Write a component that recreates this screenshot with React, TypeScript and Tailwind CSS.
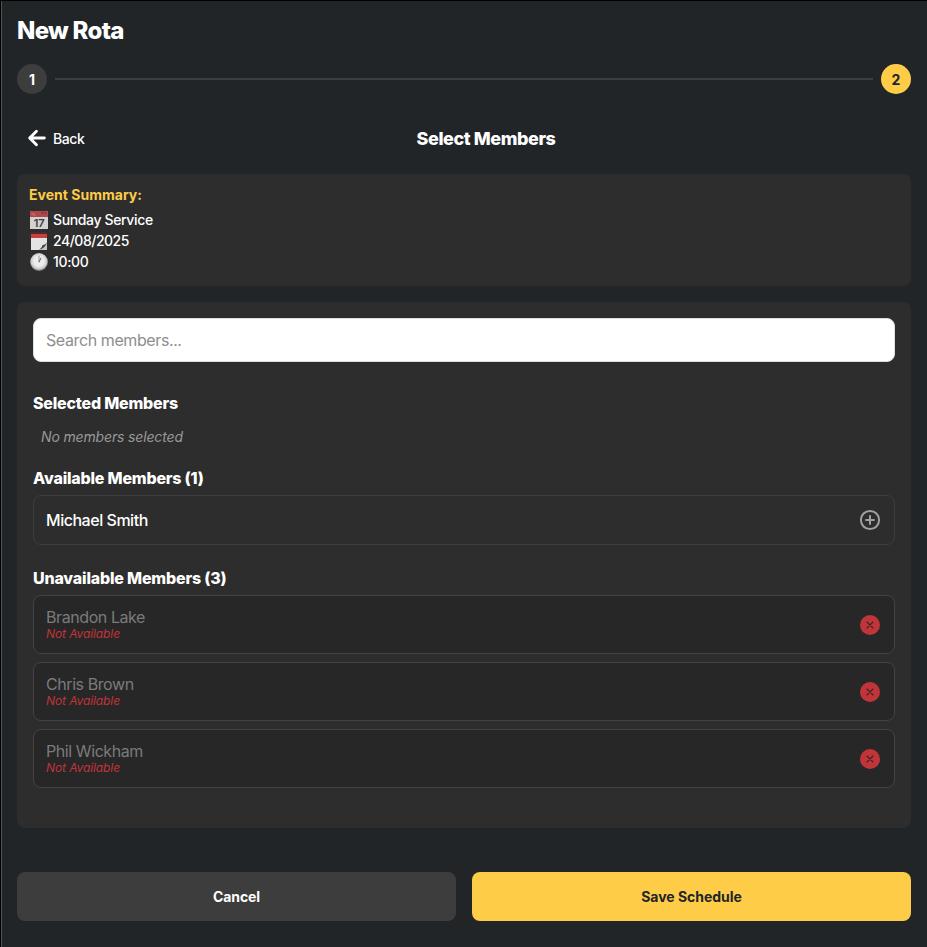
import React from "react";

const unavailable = ["Brandon Lake", "Chris Brown", "Phil Wickham"];

function BackArrow() {
  return (
    <svg viewBox="0 0 512 512" className="size-6 shrink-0" fill="none" stroke="currentColor" strokeWidth="62" strokeLinecap="round" strokeLinejoin="round">
      <path d="M244 400 100 256l144-144M120 256h292" />
    </svg>
  );
}

function AddCircle() {
  return (
    <svg viewBox="0 0 24 24" className="size-6 text-[#a0a0a0]" fill="none" stroke="currentColor" strokeWidth="2" strokeLinecap="round">
      <circle cx="12" cy="12" r="9.1" />
      <path d="M12 8v8M8 12h8" />
    </svg>
  );
}

function CloseCircle() {
  return (
    <svg viewBox="0 0 24 24" className="size-6">
      <circle cx="12" cy="12" r="10" fill="#c13439" />
      <path d="m9 9 6 6m0-6-6 6" stroke="#3a2425" strokeWidth="1.1" strokeLinecap="round" />
    </svg>
  );
}

function CalendarIcon() {
  return (
    <svg width="18" height="18" viewBox="0 0 18 18" className="shrink-0">
      <rect width="18" height="18" rx="0.5" fill="#d2d2d2" />
      <rect width="18" height="6" rx="0.5" fill="#b0484b" />
      <path d="M2.2 2v2.2M4 2v2.2h1.4" stroke="#d98c8d" strokeWidth="0.7" fill="none" />
      <circle cx="12.2" cy="1.8" r="0.9" fill="#6e2c2e" />
      <circle cx="15.2" cy="1.8" r="0.9" fill="#6e2c2e" />
      <text x="9" y="16" textAnchor="middle" fontSize="11" fontWeight="600" letterSpacing="-0.3" fill="#3b3b3b" fontFamily="Inter, sans-serif">17</text>
    </svg>
  );
}

function NotepadIcon() {
  return (
    <svg width="18" height="18" viewBox="0 0 18 18" className="shrink-0">
      <path d="M1 1h16v10.5L11 18H1z" fill="#e4e3e2" />
      <path d="M1 1h16v5H1z" fill="#c5413f" />
      <path d="M1 0h16v2H1z" fill="#4b2a2b" />
      <path d="M17 10c-1 2.300-3 2.500-4.500 2.700 0 2-1.500 4.300-3.500 5.300h8z" fill="#c4c4c3" />
      <path d="M17 10.500c-1.500 2-3 2.300-4.700 2.700-.2 2-1.500 3.500-3.300 4.400 3.500-.4 6.500-3 8-7.100z" fill="#454545" />
    </svg>
  );
}

function ClockIcon() {
  return (
    <svg width="18" height="18" viewBox="0 0 18 18" className="shrink-0">
      <defs>
        <radialGradient id="face" cx="50%" cy="45%" r="52%">
          <stop offset="0.55" stopColor="#ededed" />
          <stop offset="0.85" stopColor="#c9cacb" />
          <stop offset="1" stopColor="#858585" />
        </radialGradient>
      </defs>
      <circle cx="9" cy="9" r="8.900" fill="url(#face)" />
      <path d="M9 9V2.700" stroke="#999" strokeWidth="1" />
      <path d="M9 9.300l2-4.500" stroke="#666" strokeWidth="1" />
    </svg>
  );
}

export default function App() {
  return (
    <div className="flex h-[947px] w-[927px] flex-col overflow-hidden border-l border-t border-black bg-[#212528] font-['Inter',sans-serif] text-white">
      <div className="flex flex-1 flex-col border-l border-[#505152] pl-[15px] pr-4">
        <h1 className="mt-[14px] h-8 text-2xl font-extrabold leading-8 tracking-[-0.72px]">New Rota</h1>

        <div className="mt-[17px] flex items-center gap-2">
          <span className="flex size-[30px] items-center justify-center rounded-full bg-[#3d3d3d] pt-0.5 text-sm font-bold">1</span>
          <span className="h-0.5 flex-1 bg-[#3d3d3d]" />
          <span className="flex size-[30px] items-center justify-center rounded-full bg-[#ffcc48] pt-0.5 text-sm font-bold text-[#212528]">2</span>
        </div>

        <div className="mt-6 grid h-10 grid-cols-[76px_1fr_32px] items-center">
          <button className="flex items-center gap-1 pl-2 text-sm font-medium tracking-[-0.4px]">
            <BackArrow />
            <span className="pt-0.5">Back</span>
          </button>
          <h2 className="pt-0.5 text-center text-lg font-extrabold tracking-[-0.42px]">Select Members</h2>
        </div>

        <section className="mt-4 h-28 rounded-lg bg-[#2d2d2d] px-3 pt-3 text-sm font-medium tracking-[-0.36px]">
          <h3 className="h-[23px] font-bold leading-[18px] tracking-[0.02px] text-[#ffcc48]">Event Summary:</h3>
          <p className="flex h-[21px] items-center gap-[5px] pl-px"><CalendarIcon />Sunday Service</p>
          <p className="flex h-[21px] items-center gap-[5px] pl-px"><NotepadIcon /><span className="tracking-[-0.48px]">24/08/2025</span></p>
          <p className="flex h-[21px] items-center gap-[5px] pl-px"><ClockIcon />10:00</p>
        </section>

        <section className="mt-4 h-[526px] rounded-lg bg-[#2d2d2d] p-4">
          <input
            placeholder="Search members..."
            className="block h-11 w-full rounded-lg border border-[#dddddd] bg-white px-3 text-base tracking-[-0.4px] text-black placeholder:text-[#8e8e8e]"
          />
          <h3 className="mt-[31px] text-base font-extrabold leading-[21px] tracking-[-0.21px]">Selected Members</h3>
          <p className="mt-[14px] pl-2 text-sm italic leading-[18px] tracking-[-0.15px] text-[#999999]">No members selected</p>
          <h3 className="mt-[22px] text-base font-extrabold leading-[21px] tracking-[-0.21px]">Available Members (1)</h3>
          <div className="mt-[6px] flex h-[50px] items-center justify-between rounded-lg border border-[#3d3d3d] px-3">
            <span className="text-base font-medium tracking-[-0.47px]">Michael Smith</span>
            <AddCircle />
          </div>
          <h3 className="mt-[23px] text-base font-extrabold leading-[21px] tracking-[-0.19px]">Unavailable Members (3)</h3>
          <div className="mt-[6px] flex flex-col gap-2">
            {unavailable.map((name) => (
              <div key={name} className="flex h-[59px] items-center justify-between rounded-lg border border-[#434343] bg-[#272727] px-3">
                <div>
                  <p className="text-base leading-[19px] tracking-[-0.42px] text-[#7b7b7b]">{name}</p>
                  <p className="text-xs italic leading-[14px] tracking-[-0.1px] text-[#c13439]">Not Available</p>
                </div>
                <CloseCircle />
              </div>
            ))}
          </div>
        </section>

        <div className="mt-11 grid grid-cols-2 gap-4 text-sm font-bold">
          <button className="h-[49px] rounded-lg bg-[#3d3d3d] tracking-[-0.1px]">Cancel</button>
          <button className="h-[49px] rounded-lg bg-[#ffcc48] tracking-[-0.03px] text-[#212528]">Save Schedule</button>
        </div>
      </div>
    </div>
  );
}
